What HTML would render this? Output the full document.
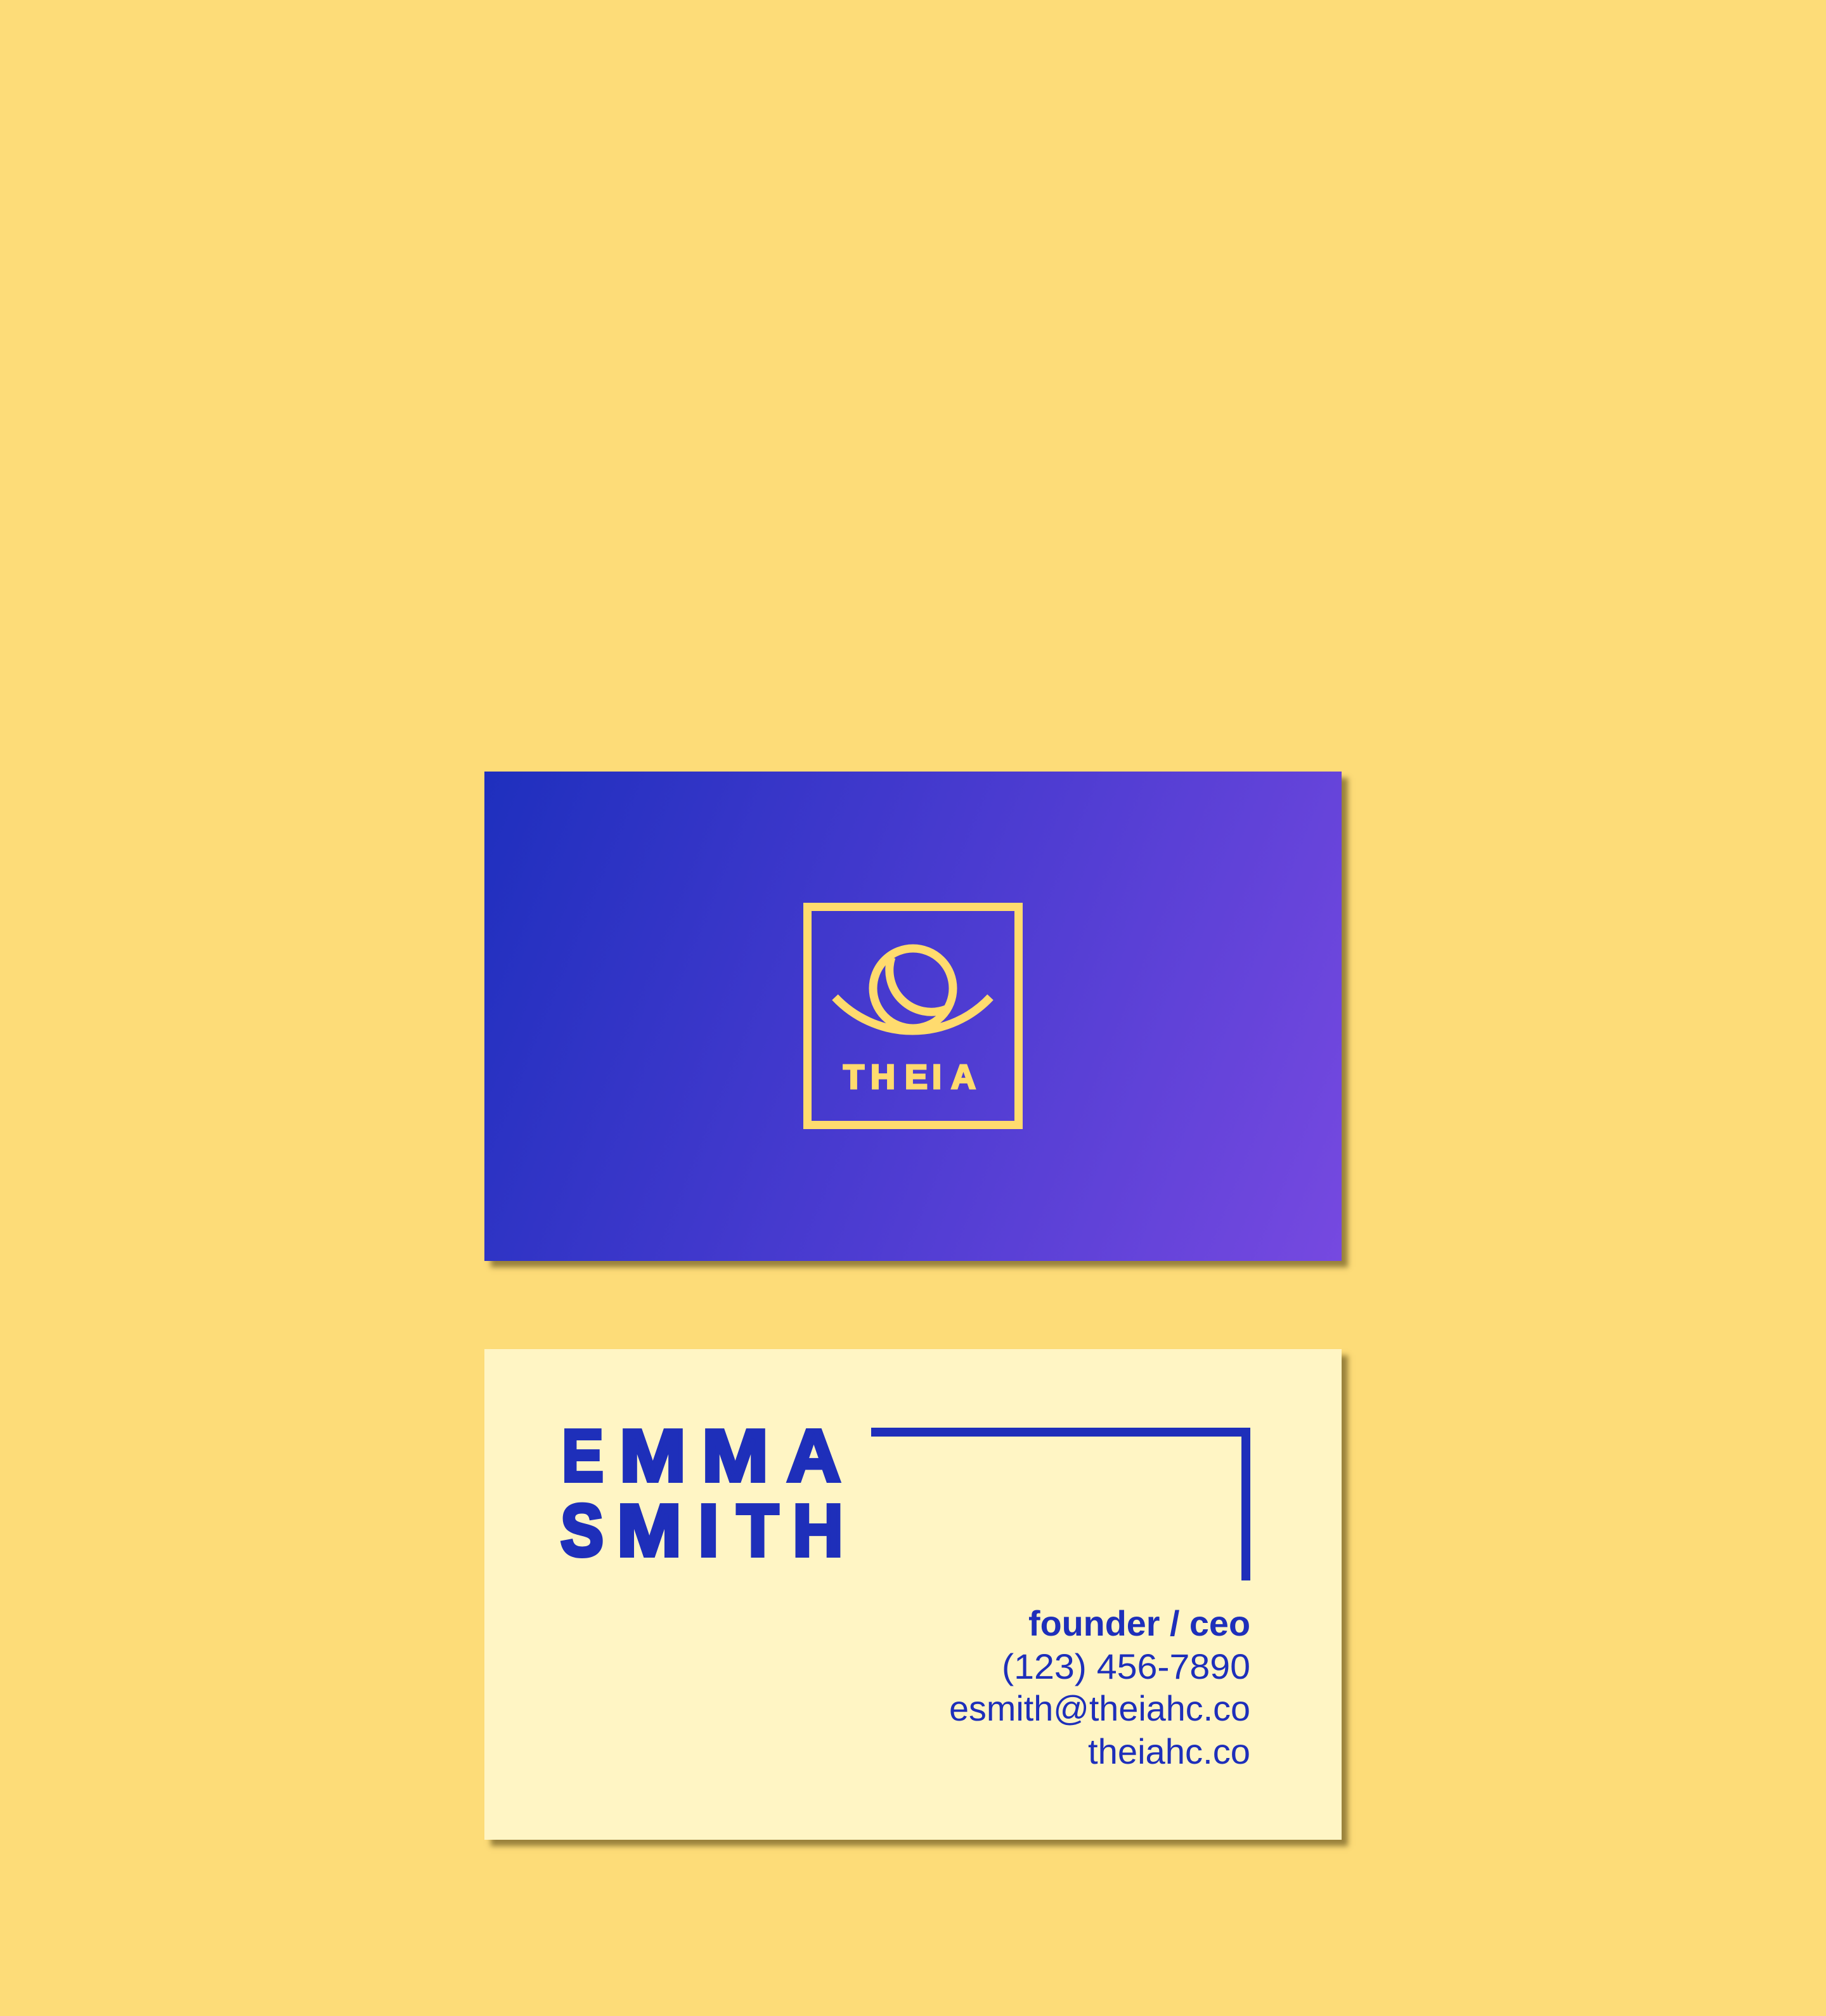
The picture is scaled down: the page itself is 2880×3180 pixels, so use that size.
<!DOCTYPE html>
<html><head><meta charset="utf-8"><style>
html,body{margin:0;padding:0;background:#FDDC78;}
body{width:2880px;height:3180px;position:relative;overflow:hidden;}
.card{position:absolute;left:764px;width:1352px;box-shadow:10px 10px 8px rgba(120,100,40,0.75);}
#c1{top:1217px;height:772px;background:linear-gradient(112deg,#1e2fbe 0%,#4a3bd0 50%,#7649e0 100%);}
#c2{top:2128px;height:774px;background:#FFF5C4;}
svg{position:absolute;left:0;top:0;}
</style></head><body>
<div class="card" id="c1"></div>
<div class="card" id="c2"></div>
<svg width="2880" height="3180" viewBox="0 0 2880 3180">
  <g fill="none" stroke="#FFDB6E" stroke-width="13">
    <rect x="1273.5" y="1430.5" width="333" height="344"/>
    <circle cx="1440" cy="1559" r="63"/>
    <path d="M1317 1573 A168 168 0 0 0 1562 1573"/>
    <path d="M1406 1510 A66 66 0 0 0 1492 1592"/>
  </g>
  <g fill="#FFDB6E" stroke="#FFDB6E" stroke-width="3" font-family="Liberation Sans, sans-serif" font-weight="bold" font-size="54">
    <text x="1330" y="1717">T</text><text x="1373" y="1717">H</text><text x="1427" y="1717">E</text><text x="1470" y="1717">I</text><text x="1500" y="1717">A</text>
  </g>
  <g fill="#1E2FBA" stroke="#1E2FBA" stroke-width="6" font-family="Liberation Sans, sans-serif" font-weight="bold" font-size="116">
    <text x="886" y="2336" textLength="66" lengthAdjust="spacingAndGlyphs">E</text>
    <text x="977" y="2336" textLength="105" lengthAdjust="spacingAndGlyphs">M</text>
    <text x="1107" y="2336" textLength="105" lengthAdjust="spacingAndGlyphs">M</text>
    <text x="1241" y="2336" textLength="85" lengthAdjust="spacingAndGlyphs">A</text>
    <text x="884" y="2454" textLength="68" lengthAdjust="spacingAndGlyphs">S</text>
    <text x="973" y="2454" textLength="102" lengthAdjust="spacingAndGlyphs">M</text>
    <text x="1101" y="2454" textLength="33" lengthAdjust="spacingAndGlyphs">I</text>
    <text x="1162" y="2454" textLength="66" lengthAdjust="spacingAndGlyphs">T</text>
    <text x="1250" y="2454" textLength="80" lengthAdjust="spacingAndGlyphs">H</text>
  </g>
  <path d="M1374 2259 H1965 V2493" fill="none" stroke="#1E2FBA" stroke-width="14"/>
  <g fill="#1E2FBA" font-family="Liberation Sans, sans-serif" font-size="56">
    <text x="1622" y="2580" font-weight="bold" textLength="350" lengthAdjust="spacingAndGlyphs">founder / ceo</text>
    <text x="1580" y="2648" textLength="392" lengthAdjust="spacingAndGlyphs">(123) 456-7890</text>
    <text x="1497" y="2714" textLength="475" lengthAdjust="spacingAndGlyphs">esmith@theiahc.co</text>
    <text x="1716" y="2782" textLength="256" lengthAdjust="spacingAndGlyphs">theiahc.co</text>
  </g>
</svg>
</body></html>
